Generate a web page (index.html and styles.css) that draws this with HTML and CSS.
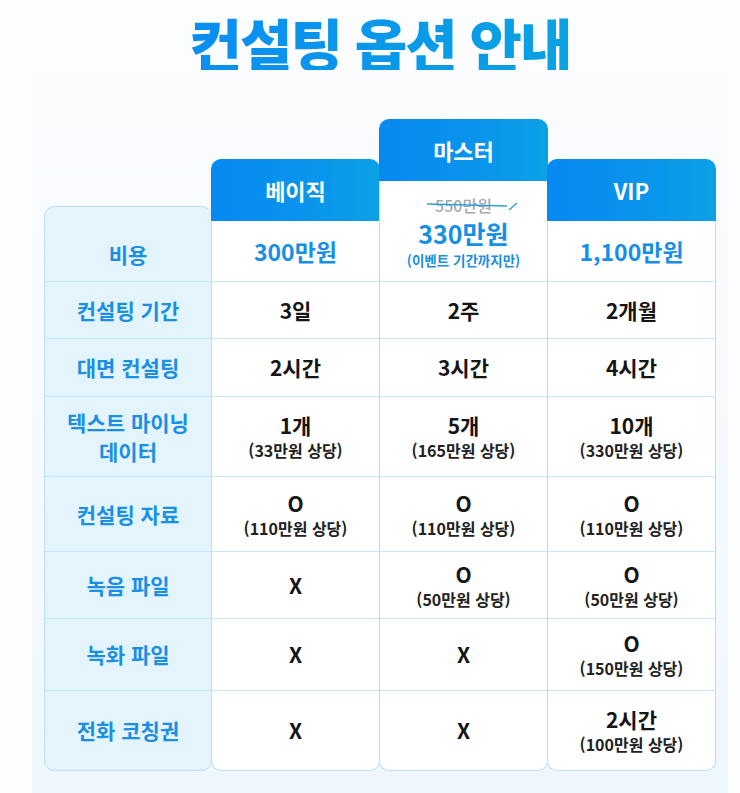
FILE: index.html
```html
<!DOCTYPE html>
<html lang="ko">
<head>
<meta charset="utf-8">
<title>컨설팅 옵션 안내</title>
<link rel="stylesheet" href="styles.css">
</head>
<body>
  <header class="top">
    <h1 class="title">컨설팅 옵션 안내</h1>
  </header>
  <section class="panel">
    <div class="table">
      <div class="col col-label">
        <div class="cell cell-cost">비용</div>
        <div class="cell r1">컨설팅 기간</div>
        <div class="cell r2">대면 컨설팅</div>
        <div class="cell r3">텍스트 마이닝<br>데이터</div>
        <div class="cell r4">컨설팅 자료</div>
        <div class="cell r5">녹음 파일</div>
        <div class="cell r6">녹화 파일</div>
        <div class="cell r7">전화 코칭권</div>
      </div>

      <div class="col col-plan">
        <div class="plan-head">베이직</div>
        <div class="plan-body">
          <div class="cell cell-cost"><span class="price">300만원</span></div>
          <div class="cell r1"><span class="val">3일</span></div>
          <div class="cell r2"><span class="val">2시간</span></div>
          <div class="cell r3"><span class="val">1개</span><span class="sub">(33만원 상당)</span></div>
          <div class="cell r4"><span class="val">O</span><span class="sub">(110만원 상당)</span></div>
          <div class="cell r5"><span class="val">X</span></div>
          <div class="cell r6"><span class="val">X</span></div>
          <div class="cell r7"><span class="val">X</span></div>
        </div>
      </div>

      <div class="col col-plan col-master">
        <div class="plan-head">마스터</div>
        <div class="plan-body">
          <div class="cell cell-cost cost-master">
            <span class="old-price">550만원<svg class="strike" width="96" height="18" viewBox="0 0 96 18"><path d="M2 8 L82 10" stroke="#2f9fd6" stroke-width="1.4" fill="none"/><path d="M84 14 L92 7" stroke="#2f9fd6" stroke-width="1.4" fill="none"/></svg></span>
            <span class="price price-big">330만원</span>
            <span class="event">(이벤트 기간까지만)</span>
          </div>
          <div class="cell r1"><span class="val">2주</span></div>
          <div class="cell r2"><span class="val">3시간</span></div>
          <div class="cell r3"><span class="val">5개</span><span class="sub">(165만원 상당)</span></div>
          <div class="cell r4"><span class="val">O</span><span class="sub">(110만원 상당)</span></div>
          <div class="cell r5"><span class="val">O</span><span class="sub">(50만원 상당)</span></div>
          <div class="cell r6"><span class="val">X</span></div>
          <div class="cell r7"><span class="val">X</span></div>
        </div>
      </div>

      <div class="col col-plan">
        <div class="plan-head">VIP</div>
        <div class="plan-body">
          <div class="cell cell-cost"><span class="price">1,100만원</span></div>
          <div class="cell r1"><span class="val">2개월</span></div>
          <div class="cell r2"><span class="val">4시간</span></div>
          <div class="cell r3"><span class="val">10개</span><span class="sub">(330만원 상당)</span></div>
          <div class="cell r4"><span class="val">O</span><span class="sub">(110만원 상당)</span></div>
          <div class="cell r5"><span class="val">O</span><span class="sub">(50만원 상당)</span></div>
          <div class="cell r6"><span class="val">O</span><span class="sub">(150만원 상당)</span></div>
          <div class="cell r7"><span class="val">2시간</span><span class="sub">(100만원 상당)</span></div>
        </div>
      </div>
    </div>
  </section>
</body>
</html>
```

FILE: styles.css
```css
* { box-sizing: border-box; }

html, body {
  margin: 0;
  padding: 0;
}

body {
  background: #fcfdfe;
  font-family: "Noto Sans CJK KR", "Noto Sans", sans-serif;
  color: #151515;
  height: 793px;
  overflow: hidden;
}

.top {
  height: 70px;
  display: flex;
  justify-content: center;
  padding-left: 20px;
}

.title {
  margin: 7px 0 0;
  font-size: 57px;
  line-height: 70px;
  font-weight: 900;
  letter-spacing: -2px;
  background: linear-gradient(90deg, #0a8ef2, #0aa2e2);
  -webkit-background-clip: text;
  background-clip: text;
  color: transparent;
}

.panel {
  margin-left: 32px;
  width: 696px;
  height: 723px;
  background: linear-gradient(180deg, #fafcfe 0%, #f4f9fd 70%, #eef7fd 100%);
  padding: 49px 0 0 12px;
}

.table {
  display: flex;
  align-items: flex-end;
}

.col {
  width: 168px;
  display: flex;
  flex-direction: column;
}

.col + .col {
  margin-left: -1px;
  width: 169px;
}

.col-label {
  background: #e3f4fd;
  border: 1px solid #b9e0f5;
  border-radius: 10px;
  color: #1a8fe3;
  font-size: 21px;
  font-weight: 700;
}

.cell {
  display: flex;
  flex-direction: column;
  align-items: center;
  justify-content: center;
  text-align: center;
  border-bottom: 1px solid #c8e7f8;
  line-height: 29px;
}

.cell.r7 { border-bottom: none; height: 79px; }

.col-label .cell-cost { height: 75px; padding-top: 20px; }
.cell-cost { height: 61px; }
.r1 { height: 57px; }
.r2 { height: 58px; }
.r3 { height: 80px; }
.r4 { height: 75px; }
.r5 { height: 67px; }
.r6 { height: 72px; }

.cost-master {
  height: 101px;
  justify-content: flex-start;
  padding-top: 15px;
}

.plan-head {
  height: 62px;
  border-radius: 10px 10px 0 0;
  background: linear-gradient(90deg, #0789f2 0%, #0a96eb 65%, #0ca1e5 100%);
  color: #fff;
  font-size: 22px;
  font-weight: 700;
  display: flex;
  align-items: center;
  justify-content: center;
}

.plan-body {
  background: #fff;
  border: 1px solid #b9e0f5;
  border-top: none;
  border-radius: 0 0 10px 10px;
}

.price {
  color: #1590e6;
  font-size: 23px;
  font-weight: 700;
  line-height: 28px;
}

.price-big {
  font-size: 25px;
  line-height: 28px;
  margin-top: 5px;
}

.old-price {
  position: relative;
  color: #a3abb2;
  font-size: 16px;
  font-weight: 500;
  line-height: 18px;
}

.strike {
  position: absolute;
  left: -10px;
  top: 0;
}

.event {
  color: #1a8fe0;
  font-size: 13.5px;
  font-weight: 700;
  line-height: 18px;
  margin-top: 4px;
}

.val {
  font-size: 21px;
  font-weight: 700;
  line-height: 27px;
  color: #151515;
}

.sub {
  font-size: 16px;
  font-weight: 600;
  line-height: 22px;
  color: #222;
}
```
